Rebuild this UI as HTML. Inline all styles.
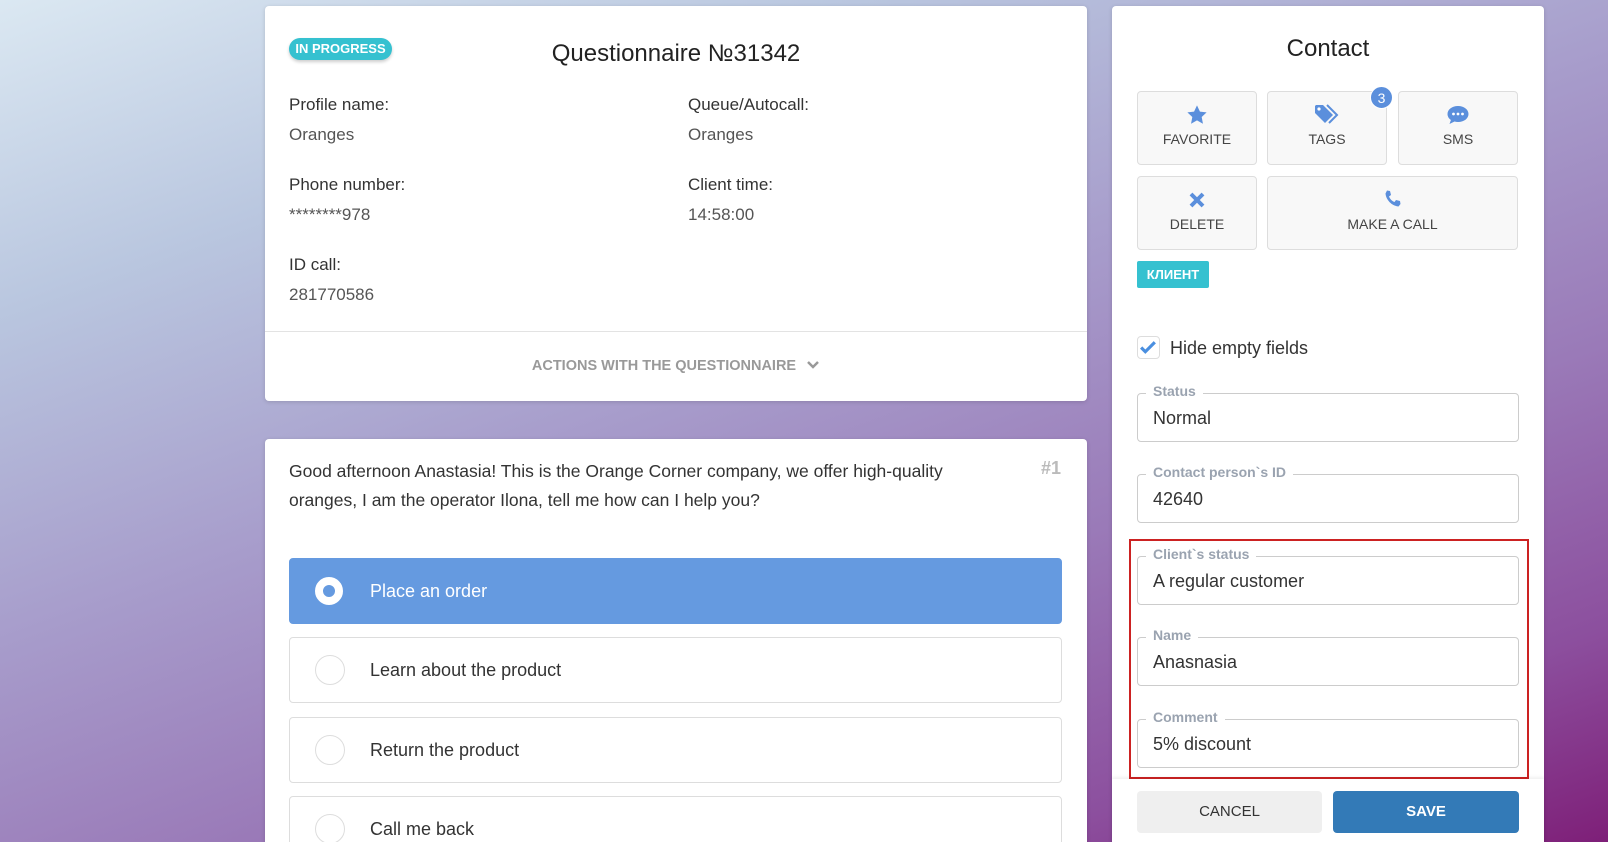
<!DOCTYPE html>
<html style="width:1608px;height:842px;overflow:hidden;background:#a79ccb"><head><meta charset="utf-8"><style>
*{box-sizing:border-box;margin:0;padding:0}
body{width:1608px;height:842px;overflow:hidden;position:relative;font-family:"Liberation Sans",sans-serif;color:#333;
background:linear-gradient(160deg,#dbe8f2 0%,#b9c6df 22%,#a79ccb 45%,#9a7ab8 65%,#8c4f9e 85%,#7e1f78 100%);}
.card{position:absolute;background:#fff;border-radius:4px;box-shadow:0 1px 4px rgba(0,0,0,.15)}
.abs{position:absolute}
.lbl{font-size:17px;color:#333}
.val{font-size:17px;color:#555}
.btn{position:absolute;background:#f8f8f8;border:1px solid #ddd;border-radius:4px;text-align:center;font-size:14px;color:#444}
.btn svg{display:block;margin:12px auto 5px}
.fs{position:absolute;left:1137px;width:382px;height:49px;border:1px solid #ccc;border-radius:4px}
.fs .lg{position:absolute;left:8px;top:-11px;background:#fff;padding:0 7px;font-size:14px;color:#9aa3b0;font-weight:bold}
.fs .v{position:absolute;left:15px;top:14px;font-size:18px;color:#333}
.opt{position:absolute;left:289px;width:773px;height:66px;border:1px solid #ddd;border-radius:4px;font-size:18px;color:#333}
.opt .r{position:absolute;left:25px;top:17px;width:30px;height:30px;border-radius:50%;border:1px solid #ddd}
.opt span{position:absolute;left:80px;top:22px}
</style></head><body>
<div class="card" style="left:265px;top:6px;width:822px;height:395px">
  <div class="abs" style="left:24px;top:32px;width:103px;height:22px;border-radius:11px;background:#35c1d0;color:#fff;font-size:13px;font-weight:bold;text-align:center;line-height:22px;box-shadow:0 2px 3px rgba(0,0,0,.2)">IN PROGRESS</div>
  <div class="abs" style="left:0;width:822px;top:34px;text-align:center;font-size:24px;color:#222">Questionnaire №31342</div>
  <div class="abs lbl" style="left:24px;top:89px">Profile name:</div>
  <div class="abs val" style="left:24px;top:119px">Oranges</div>
  <div class="abs lbl" style="left:423px;top:89px">Queue/Autocall:</div>
  <div class="abs val" style="left:423px;top:119px">Oranges</div>
  <div class="abs lbl" style="left:24px;top:169px">Phone number:</div>
  <div class="abs val" style="left:24px;top:199px">********978</div>
  <div class="abs lbl" style="left:423px;top:169px">Client time:</div>
  <div class="abs val" style="left:423px;top:199px">14:58:00</div>
  <div class="abs lbl" style="left:24px;top:249px">ID call:</div>
  <div class="abs val" style="left:24px;top:279px">281770586</div>
  <div class="abs" style="left:0;top:325px;width:822px;border-top:1px solid #e3e3e3"></div>
  <div class="abs" style="left:0;width:822px;top:352px;text-align:center;font-size:14.5px;font-weight:bold;color:#999">ACTIONS WITH THE QUESTIONNAIRE <svg width="14" height="10" viewBox="0 0 14 10" style="margin-left:6px"><path d="M2 2l5 5 5-5" stroke="#999" stroke-width="2.5" fill="none"/></svg></div>
</div>
<div class="card" style="left:265px;top:439px;width:822px;height:420px">
  <div class="abs" style="left:24px;top:18px;font-size:17.5px;line-height:29px;color:#333;width:700px">Good afternoon Anastasia! This is the Orange Corner company, we offer high-quality oranges, I am the operator Ilona, tell me how can I help you?</div>
  <div class="abs" style="right:26px;top:19px;font-size:18px;font-weight:bold;color:#bbb">#1</div>
</div>
<div class="opt" style="top:558px;background:#659ae0;border-color:#659ae0;color:#fff"><div class="r" style="border:8px solid #fff;background:#659ae0;width:28px;height:28px;top:18px"></div><span>Place an order</span></div>
<div class="opt" style="top:637px"><div class="r"></div><span>Learn about the product</span></div>
<div class="opt" style="top:717px"><div class="r"></div><span>Return the product</span></div>
<div class="opt" style="top:796px;height:70px"><div class="r"></div><span>Call me back</span></div>

<div class="card" style="left:1112px;top:6px;width:432px;height:850px"></div>
<div class="abs" style="left:1112px;width:432px;top:35px;text-align:center;font-size:24px;color:#222">Contact</div>
<div class="btn" style="left:1137px;top:91px;width:120px;height:74px"><svg width="22" height="22" viewBox="0 0 24 24"><path d="M12 1.5l3.2 6.8 7.3.9-5.4 5 1.4 7.3L12 17.8l-6.5 3.7 1.4-7.3-5.4-5 7.3-.9z" fill="#5b8fdc"/></svg>FAVORITE</div>
<div class="btn" style="left:1267px;top:91px;width:120px;height:74px"><svg width="26" height="22" viewBox="0 0 26 22"><path d="M1 2v7l10 10 8-8L9 1H2z" fill="#5b8fdc"/><circle cx="5" cy="5" r="1.6" fill="#fff"/><path d="M13 1l10 10-8 8" stroke="#5b8fdc" stroke-width="2" fill="none"/></svg>TAGS</div>
<div class="abs" style="left:1370px;top:86px;width:23px;height:23px;border-radius:50%;background:#5b8fdc;color:#fff;font-size:14px;text-align:center;line-height:23px;border:1px solid #fff">3</div>
<div class="btn" style="left:1398px;top:91px;width:120px;height:74px"><svg width="24" height="22" viewBox="0 0 24 22"><path d="M12 2C6 2 1.5 5.5 1.5 10c0 2.4 1.3 4.5 3.4 6L3.5 20l5-2.5c1.1.3 2.3.5 3.5.5 6 0 10.5-3.5 10.5-8S18 2 12 2z" fill="#5b8fdc"/><circle cx="7.5" cy="10" r="1.4" fill="#fff"/><circle cx="12" cy="10" r="1.4" fill="#fff"/><circle cx="16.5" cy="10" r="1.4" fill="#fff"/></svg>SMS</div>
<div class="btn" style="left:1137px;top:176px;width:120px;height:74px"><svg width="18" height="18" viewBox="0 0 18 18" style="margin-top:14px;margin-bottom:7px"><path d="M3 3l12 12M15 3L3 15" stroke="#5b8fdc" stroke-width="4"/></svg>DELETE</div>
<div class="btn" style="left:1267px;top:176px;width:251px;height:74px"><svg width="20" height="20" viewBox="0 0 20 20" style="margin-top:12px;margin-bottom:7px"><path d="M4 1.5l3 .5 1 4-2 1.5c1 2.5 3 4.5 5.5 5.5L13 11l4 1 .5 3-2 2.5C9 17 3 11 2.5 4.5z" fill="#5b8fdc"/></svg>MAKE A CALL</div>
<div class="abs" style="left:1137px;top:261px;width:72px;height:27px;background:#35c1d0;color:#fff;font-size:13px;font-weight:bold;text-align:center;line-height:27px;border-radius:2px">КЛИЕНТ</div>
<div class="abs" style="left:1137px;top:336px;width:23px;height:23px;border:1px solid #ddd;border-radius:4px"><svg width="21" height="21" viewBox="0 0 20 20"><path d="M3 10l4 4 9-9" stroke="#4a8fe0" stroke-width="3" fill="none"/></svg></div>
<div class="abs" style="left:1170px;top:338px;font-size:18px;color:#333">Hide empty fields</div>
<div class="fs" style="top:393px"><div class="lg">Status</div><div class="v">Normal</div></div>
<div class="fs" style="top:474px"><div class="lg">Contact person`s ID</div><div class="v">42640</div></div>
<div class="abs" style="left:1129px;top:539px;width:400px;height:240px;border:2px solid #cc2222"></div>
<div class="fs" style="top:556px"><div class="lg">Client`s status</div><div class="v">A regular customer</div></div>
<div class="fs" style="top:637px"><div class="lg">Name</div><div class="v">Anasnasia</div></div>
<div class="fs" style="top:719px"><div class="lg">Comment</div><div class="v">5% discount</div></div>
<div class="abs" style="left:1112px;top:779px;width:432px;height:70px;background:#fff;box-shadow:0 -2px 3px rgba(0,0,0,.06)"></div>
<div class="abs" style="left:1137px;top:791px;width:185px;height:42px;background:#efefef;border-radius:4px;text-align:center;line-height:42px;font-size:15px;color:#333">CANCEL</div>
<div class="abs" style="left:1333px;top:791px;width:186px;height:42px;background:#337ab7;border-radius:4px;text-align:center;line-height:42px;font-size:15px;color:#fff;font-weight:bold">SAVE</div>
</body></html>
